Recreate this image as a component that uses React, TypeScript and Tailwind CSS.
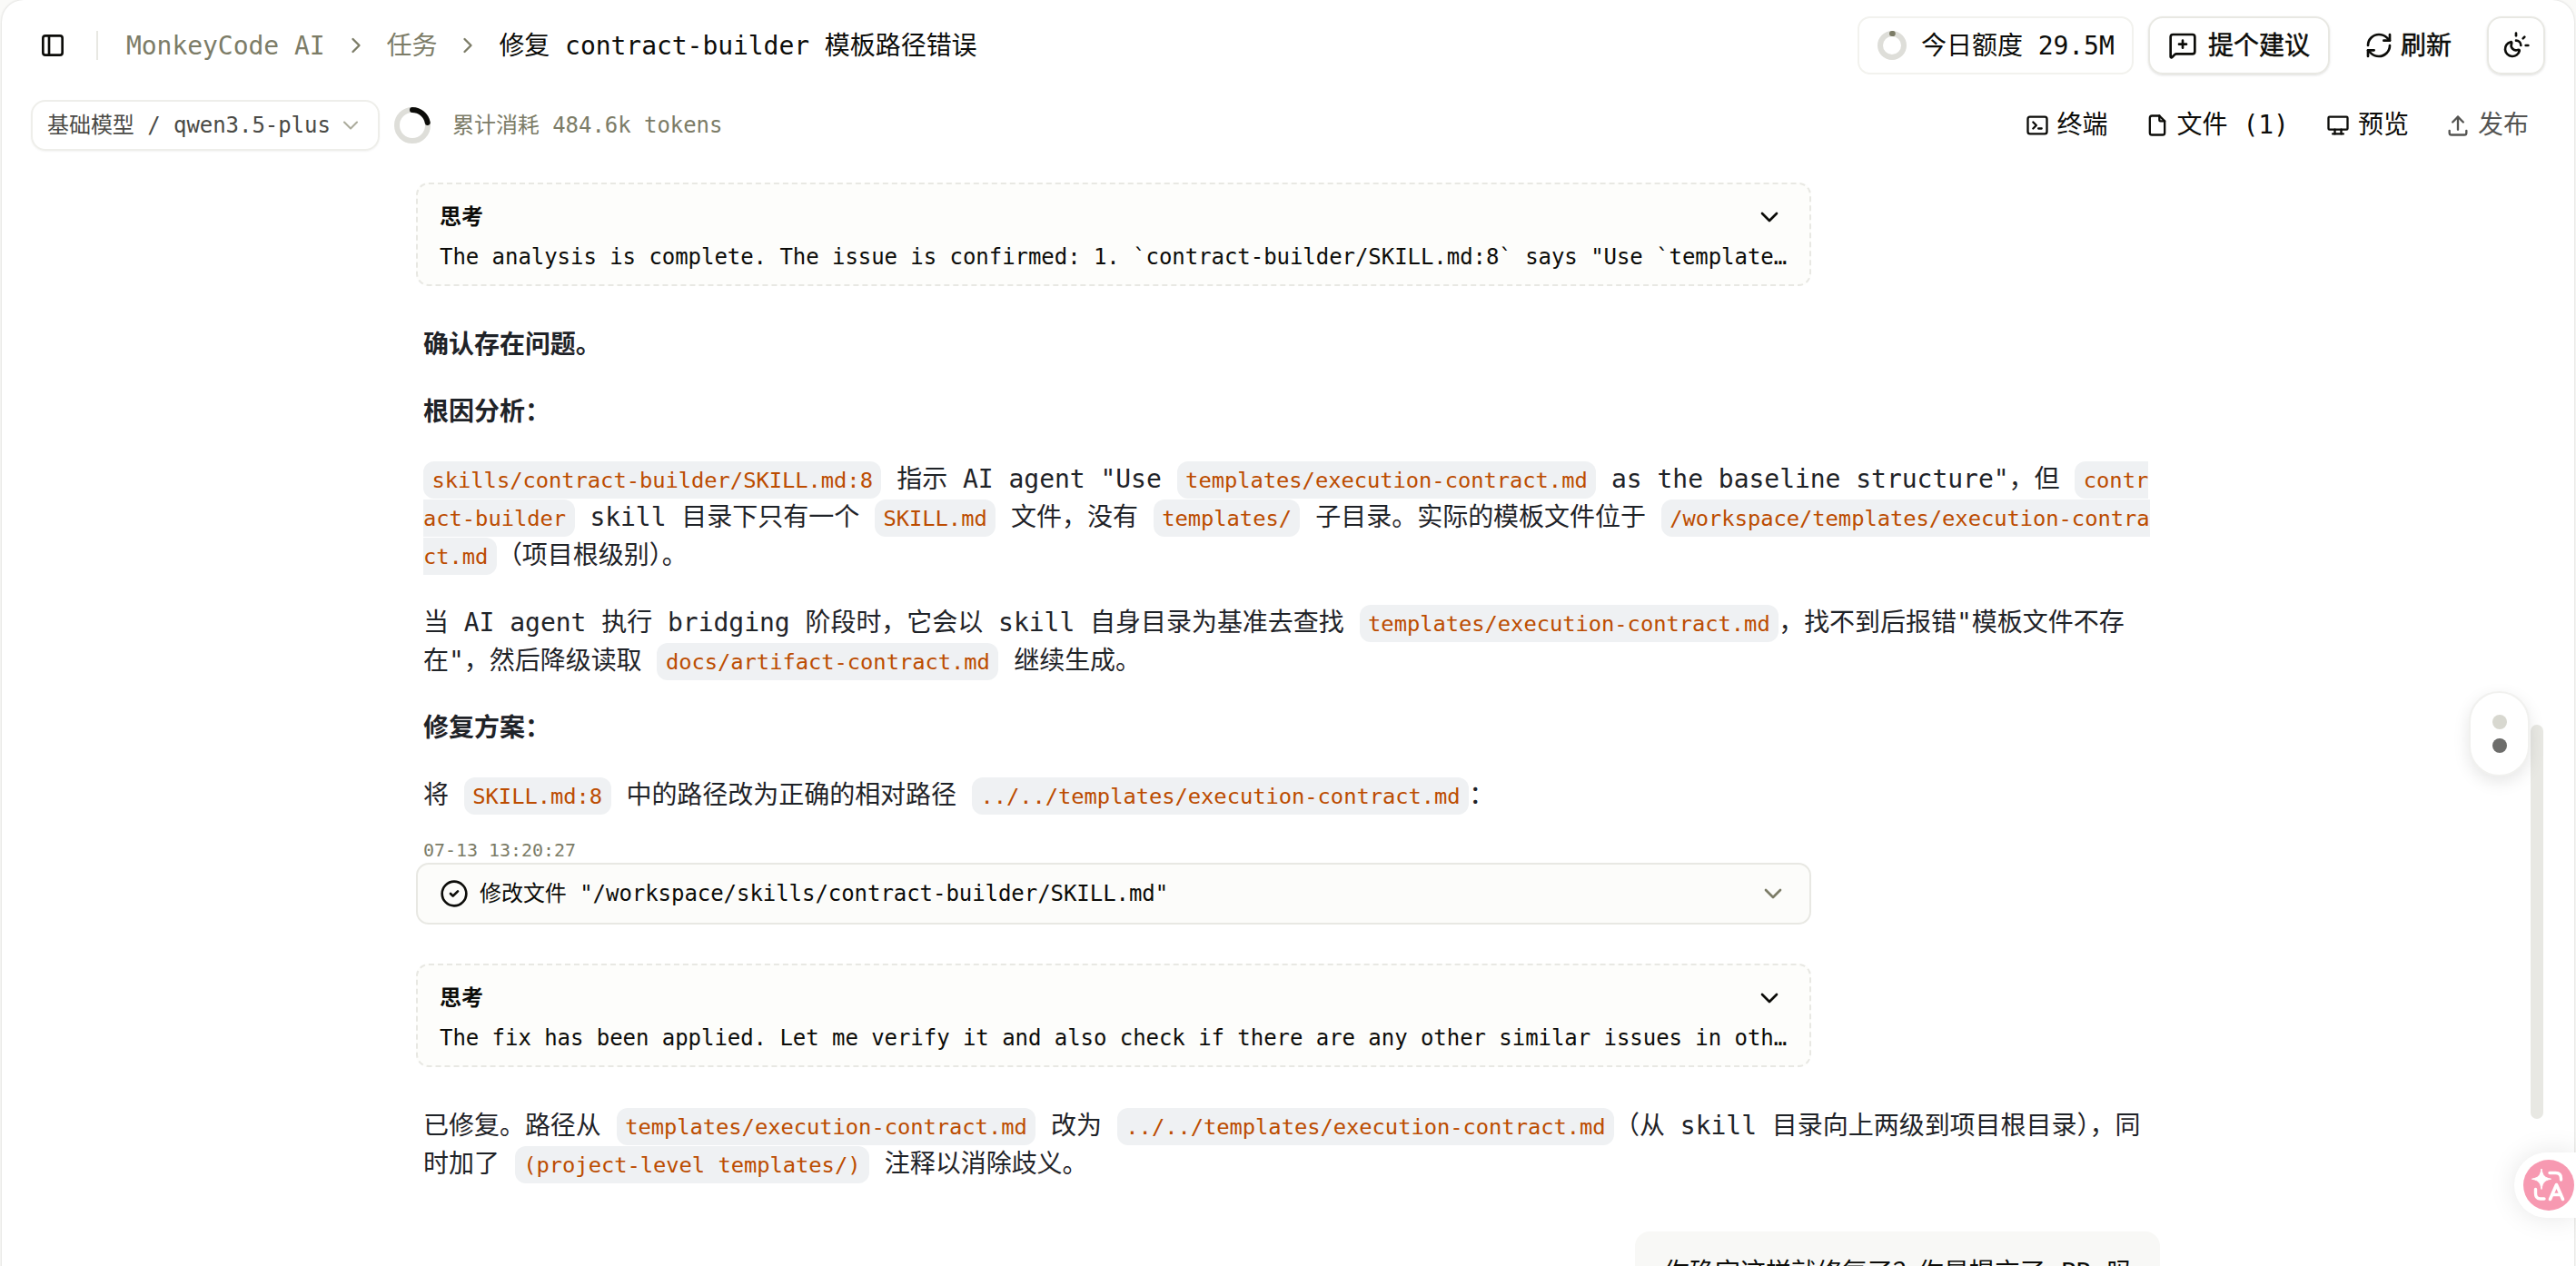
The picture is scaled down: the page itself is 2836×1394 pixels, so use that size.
import React from "react";
import { ChevronDown, ChevronRight, CircleCheck, MessageSquarePlus, RefreshCw, SunMoon } from "lucide-react";
import { TbDeviceDesktop, TbFile, TbLayoutSidebar, TbTerminal2, TbUpload } from "react-icons/tb";

function Code({ children }: { children: React.ReactNode }) {
  return (
    <code className="rounded-[12px] bg-[#eff1f3] px-[9.5px] pt-[7px] pb-[6.3px] font-[inherit] text-[23.8px] leading-none tracking-[-0.05px] text-[#bc4c00]">
      {children}
    </code>
  );
}

function Ring({ size, width, percent, color }: { size: number; width: number; percent: number; color: string }) {
  const r = (size - width) / 2;
  const c = 2 * Math.PI * r;
  return (
    <svg width={size} height={size} viewBox={`0 0 ${size} ${size}`} className="shrink-0 -rotate-90" fill="none">
      <circle cx={size / 2} cy={size / 2} r={r} stroke="#deded9" strokeWidth={width} />
      <circle
        cx={size / 2}
        cy={size / 2}
        r={r}
        stroke={color}
        strokeWidth={width}
        strokeLinecap="round"
        strokeDasharray={`${(c * percent) / 100} ${c}`}
      />
    </svg>
  );
}

function Thinking({ text }: { text: string }) {
  return (
    <div className="flex h-[114px] w-[1536px] flex-col rounded-[14px] border-2 border-dashed border-[#e8e8e3] bg-[#fdfdfb] px-6 pt-5">
      <div className="flex h-8 items-center justify-between pr-1">
        <span className="text-2xl leading-8 font-bold">思考</span>
        <ChevronDown size={32} strokeWidth={2} />
      </div>
      <div className="mt-3 text-2xl leading-8 tracking-[-0.05px] whitespace-nowrap">{text}</div>
    </div>
  );
}

function Tool({ icon, children, className = "" }: { icon: React.ReactNode; children: React.ReactNode; className?: string }) {
  return (
    <div className={`flex items-center gap-2 whitespace-nowrap ${className}`}>
      {icon}
      <span>{children}</span>
    </div>
  );
}

function Header() {
  return (
    <header className="flex h-[100px] shrink-0 items-center justify-between pr-8 pl-10 text-[28px] leading-10 tracking-[-0.05px]">
      <div className="flex items-center whitespace-nowrap text-[#7c7c67]">
        <TbLayoutSidebar size={32} className="text-[#0c0c09]" />
        <div className="ml-8 h-8 w-0.5 bg-[#e8e8e3]" />
        <span className="ml-[31px] pt-0.5">MonkeyCode AI</span>
        <ChevronRight size={28} className="ml-5" />
        <span className="ml-5 pt-0.5">任务</span>
        <ChevronRight size={28} className="ml-5" />
        <span className="ml-5 pt-0.5 text-[#0c0c09]">修复 contract-builder 模板路径错误</span>
      </div>
      <div className="flex items-center whitespace-nowrap">
        <div className="flex h-16 w-[304px] items-center gap-4 rounded-[14px] border-2 border-[#f2f2ee] pl-5">
          <Ring size={32} width={6} percent={1} color="#7c7c67" />
          <span className="pt-0.5">今日额度 29.5M</span>
        </div>
        <div className="ml-4 flex h-16 w-[200px] items-center gap-3 rounded-[16px] border-2 border-[#e8e8e3] pl-5 shadow-sm">
          <MessageSquarePlus size={32} />
          <span className="pt-px [-webkit-text-stroke:0.5px]">提个建议</span>
        </div>
        <div className="ml-[38px] flex items-center gap-2">
          <RefreshCw size={32} />
          <span className="pt-px [-webkit-text-stroke:0.5px]">刷新</span>
        </div>
        <div className="ml-[39px] flex size-16 items-center justify-center rounded-[16px] border-2 border-[#e8e8e3] shadow-sm">
          <SunMoon size={32} />
        </div>
      </div>
    </header>
  );
}

function Toolbar() {
  return (
    <div className="flex h-[76px] shrink-0 items-center justify-between pr-[50px] pl-8">
      <div className="flex items-center text-2xl tracking-[-0.05px] whitespace-nowrap">
        <div className="flex h-14 w-[384px] items-center rounded-[16px] border-2 border-[#eeeeea] pl-4 text-[#4a4a46] shadow-xs">
          <span>基础模型 / qwen3.5-plus</span>
          <ChevronDown size={28} strokeWidth={1.8} className="ml-2 text-[#abab9c]" />
        </div>
        <div className="ml-4">
          <Ring size={40} width={6} percent={22} color="#0c0c09" />
        </div>
        <span className="ml-6 text-[#7c7c67]">累计消耗 484.6k tokens</span>
      </div>
      <div className="flex items-center gap-10 text-[28px]">
        <Tool icon={<TbTerminal2 size={28} />}>终端</Tool>
        <Tool icon={<TbFile size={28} />}>文件 (1)</Tool>
        <Tool icon={<TbDeviceDesktop size={28} />}>预览</Tool>
        <Tool icon={<TbUpload size={28} />} className="opacity-70">
          发布
        </Tool>
      </div>
    </div>
  );
}

function TranslateButton() {
  return (
    <div className="absolute right-0 bottom-[53px] flex h-[72px] w-[68px] items-center rounded-l-full bg-white pl-[10px] shadow-[0_0_30px_rgba(0,0,0,0.10)]">
      <svg width="56" height="56" viewBox="0 0 56 56" fill="none">
        <circle cx="28" cy="28" r="28" fill="#f799b1" />
        <path d="M20 10c1.300 7.500 3 9.700 10.500 11.200-7.500 1.500-9.200 3.700-10.500 11.300-1.300-7.600-3-9.800-10.500-11.300C17 19.700 18.700 17.500 20 10z" fill="#fff" stroke="#fff" strokeWidth="1" strokeLinejoin="round" />
        <path d="M29 14.500h6.500c3.500 0 6 2 6 6V22" stroke="#fff" strokeWidth="3.400" strokeLinecap="round" />
        <path d="M13.500 32.500v4.500c0 4 2 6 5.500 6h4" stroke="#fff" strokeWidth="3.400" strokeLinecap="round" />
        <path d="M29.500 43.500l7-16 7 16M32 38.500h9.500" stroke="#fff" strokeWidth="3.600" strokeLinecap="round" strokeLinejoin="round" />
      </svg>
    </div>
  );
}

export default function App() {
  return (
    <div className="relative h-[1394px] w-[2836px] overflow-hidden bg-[#fafaf8] pr-0.5 pl-0.5 font-['DejaVu_Sans_Mono','Noto_Sans_CJK_SC',monospace] text-[#0c0c09]">
      <div className="flex h-[1430px] flex-col rounded-[24px] bg-white shadow-[0_0_3px_rgba(0,0,0,0.18)]">
        <Header />
        <Toolbar />
        <main className="mt-[25px] ml-[456px] flex w-[1920px] flex-col">
          <Thinking text={'The analysis is complete. The issue is confirmed: 1. `contract-builder/SKILL.md:8` says "Use `template…'} />
          <div className="mt-11 flex flex-col gap-8 pl-2 text-[28px] leading-[42px] tracking-[-0.03px] whitespace-nowrap text-[#1f2328]">
            <p className="font-bold">确认存在问题。</p>
            <p className="font-bold">根因分析：</p>
            <p>
              <Code>skills/contract-builder/SKILL.md:8</Code> 指示 AI agent "Use{" "}
              <Code>templates/execution-contract.md</Code> as the baseline structure"，但{" "}
              <Code>
                contr
                <br />
                act-builder
              </Code>{" "}
              skill 目录下只有一个 <Code>SKILL.md</Code> 文件，没有 <Code>templates/</Code> 子目录。实际的模板文件位于{" "}
              <Code>
                /workspace/templates/execution-contra
                <br />
                ct.md
              </Code>
              （项目根级别）。
            </p>
            <p>
              当 AI agent 执行 bridging 阶段时，它会以 skill 自身目录为基准去查找 <Code>templates/execution-contract.md</Code>
              ，找不到后报错"模板文件不存
              <br />
              在"，然后降级读取 <Code>docs/artifact-contract.md</Code> 继续生成。
            </p>
            <p className="font-bold">修复方案：</p>
            <p>
              将 <Code>SKILL.md:8</Code> 中的路径改为正确的相对路径 <Code>../../templates/execution-contract.md</Code>：
            </p>
          </div>
          <div className="mt-[25px] pl-2 text-[20px] leading-7 tracking-[-0.04px] text-[#7c7c67]">07-13 13:20:27</div>
          <div className="flex h-[68px] w-[1536px] items-center rounded-[14px] border-2 border-[#e8e8e3] bg-[#fcfcfa] pr-6 pl-6 text-2xl tracking-[-0.05px]">
            <CircleCheck size={32} />
            <span className="ml-3">修改文件 "/workspace/skills/contract-builder/SKILL.md"</span>
            <ChevronDown size={32} className="ml-auto text-[#7c7c67]" />
          </div>
          <div className="mt-[43px]">
            <Thinking text="The fix has been applied. Let me verify it and also check if there are any other similar issues in oth…" />
          </div>
          <p className="mt-11 pl-2 text-[28px] leading-[42px] tracking-[-0.03px] whitespace-nowrap text-[#1f2328]">
            已修复。路径从 <Code>templates/execution-contract.md</Code> 改为 <Code>../../templates/execution-contract.md</Code>
            （从 skill 目录向上两级到项目根目录），同
            <br />
            时加了 <Code>(project-level templates/)</Code> 注释以消除歧义。
          </p>
          <div className="mt-[53px] h-20 w-[578px] self-end rounded-[16px] bg-[#f8f8f6] pt-[25px] pl-8 text-[28px] leading-[42px] whitespace-nowrap">
            你确定这样就修复了？你是提交了 PR 吗
          </div>
        </main>
      </div>
      <div className="absolute top-[798px] right-[36px] h-[434px] w-[14px] rounded-full bg-[#e8e8e3]" />
      <div className="absolute top-[761px] right-[51px] flex h-[94px] w-[67px] flex-col items-center justify-center gap-[10px] rounded-full border-2 border-[#f1f1ef] bg-white shadow-[0_6px_18px_rgba(0,0,0,0.10)]">
        <div className="size-4 rounded-full bg-[#d8d8d0]" />
        <div className="size-4 rounded-full bg-[#6d6d6b]" />
      </div>
      <TranslateButton />
    </div>
  );
}
